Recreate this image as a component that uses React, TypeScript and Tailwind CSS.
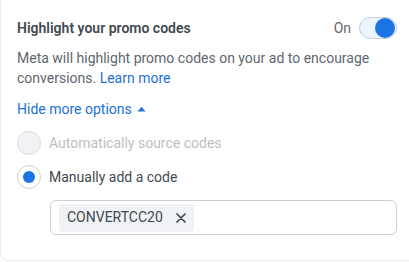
export default function App() {
  return (
    <div className="h-[262px] w-[409px] overflow-hidden bg-white font-['Roboto',sans-serif]">
      <div className="h-[261px] rounded-bl-[8px] border-b border-l border-[#e9ebee] pl-4 pr-3 pt-[17px]">
        <div className="flex h-[22px] items-center justify-between">
          <span className="text-[14px] font-semibold text-[#444950]">Highlight your promo codes</span>
          <div className="flex items-center gap-2">
            <span className="text-[14px] text-[#606770]">On</span>
            <div className="flex h-[22px] w-[38px] items-center justify-end rounded-full border border-[#ccd0d5] bg-[#ebf5ff] pr-[1px]">
              <div className="h-[20px] w-[20px] rounded-full bg-[#1b74e4]" />
            </div>
          </div>
        </div>

        <div className="mt-[9px] text-[14px] leading-[20px] text-[#606770]">
          <div>Meta will highlight promo codes on your ad to encourage</div>
          <div>
            conversions. <span className="text-[#216fdb]">Learn more</span>
          </div>
        </div>

        <div className="mt-[11px] flex h-5 items-center gap-[5px] text-[14px] text-[#216fdb]">
          <span>Hide more options</span>
          <svg width="9" height="6" viewBox="0 0 9 6">
            <path d="M0.5 5.5 L4.5 0.8 L8.5 5.5 Z" fill="#216fdb" />
          </svg>
        </div>

        <div className="mt-3 flex h-6 items-center gap-2">
          <div className="h-6 w-6 rounded-full border border-[#dadde1] bg-[#f0f2f5]" />
          <span className="text-[14px] text-[#bcc0c4]">Automatically source codes</span>
        </div>

        <div className="mt-[10px] flex h-6 items-center gap-2">
          <div className="flex h-6 w-6 items-center justify-center rounded-full border border-[#ccd0d5] bg-white">
            <div className="h-3 w-3 rounded-full bg-[#1b74e4]" />
          </div>
          <span className="text-[14px] text-[#444950]">Manually add a code</span>
        </div>

        <div className="ml-[33px] mt-[11px] flex h-[35px] items-center rounded-[6px] border border-[#ccd0d5] pl-2">
          <div className="flex h-7 items-center gap-[13px] rounded-[4px] bg-[#f0f2f5] pl-2 pr-2">
            <span className="text-[14px] text-[#444950]">CONVERTCC20</span>
            <svg width="10" height="10" viewBox="0 0 10 10">
              <path d="M1 1 L9 9 M9 1 L1 9" stroke="#444950" strokeWidth="1.7" strokeLinecap="round" />
            </svg>
          </div>
        </div>
      </div>
    </div>
  );
}
